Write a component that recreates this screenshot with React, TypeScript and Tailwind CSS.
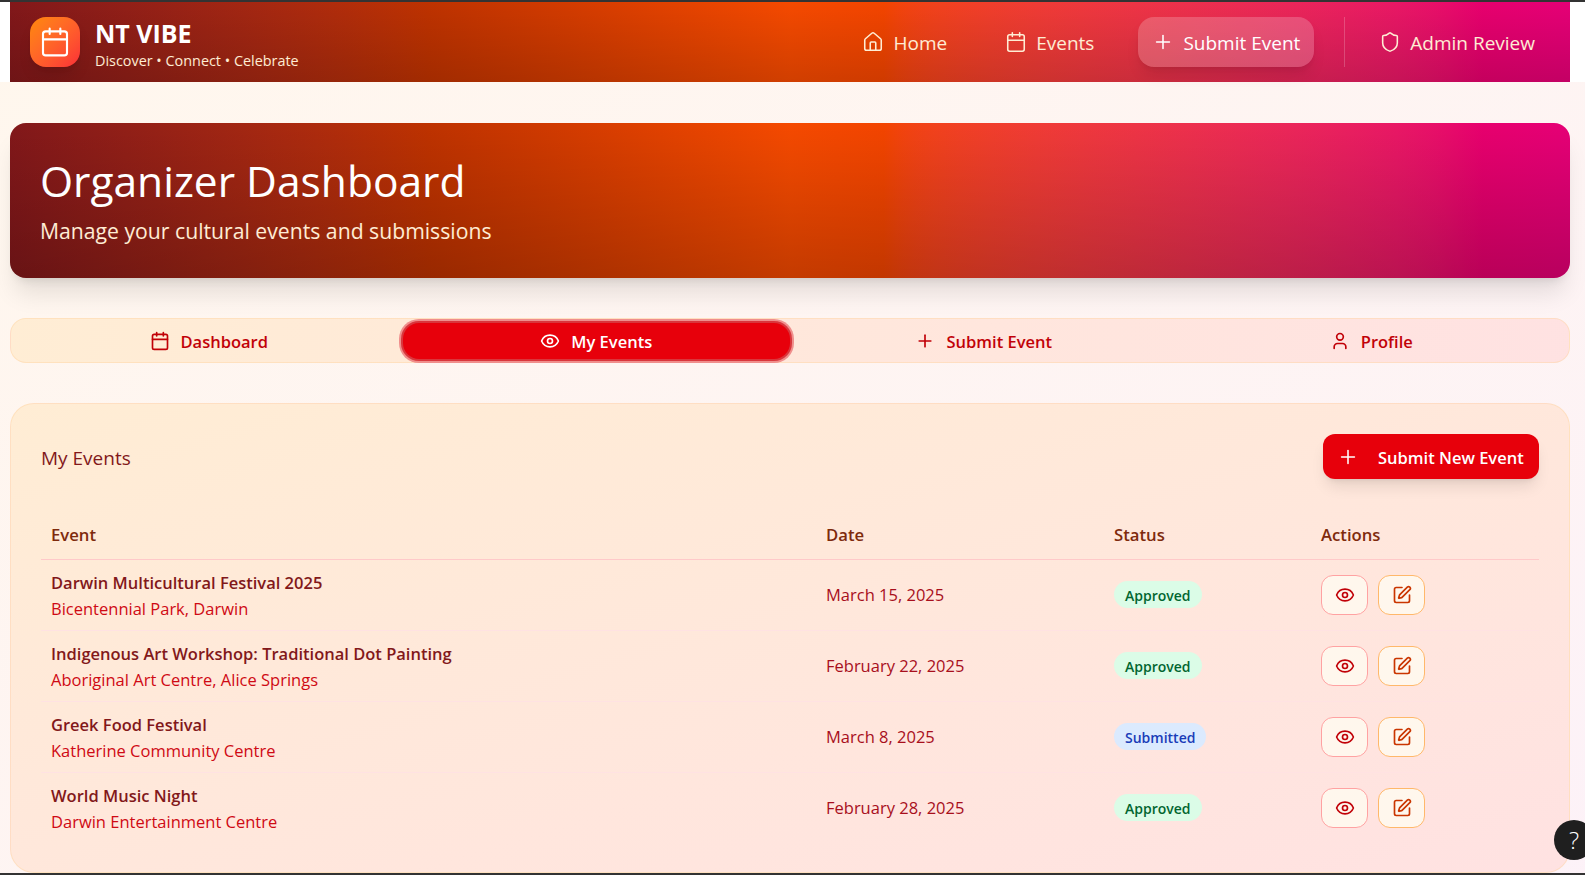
import { Calendar, Eye, House, Plus, Shield, SquarePen, User } from "lucide-react";
import type { ReactNode } from "react";

const events = [
  { title: "Darwin Multicultural Festival 2025", place: "Bicentennial Park, Darwin", date: "March 15, 2025", status: "Approved" },
  { title: "Indigenous Art Workshop: Traditional Dot Painting", place: "Aboriginal Art Centre, Alice Springs", date: "February 22, 2025", status: "Approved" },
  { title: "Greek Food Festival", place: "Katherine Community Centre", date: "March 8, 2025", status: "Submitted" },
  { title: "World Music Night", place: "Darwin Entertainment Centre", date: "February 28, 2025", status: "Approved" },
];

function NavItem({ icon, label, active }: { icon: ReactNode; label: string; active?: boolean }) {
  return (
    <a
      className={
        active
          ? "flex h-[50px] items-center gap-[9px] rounded-2xl bg-white/20 px-[14px] text-white shadow-lg"
          : "flex h-[50px] items-center gap-[9px] rounded-2xl px-[14px] text-orange-100"
      }
    >
      {icon}
      <span className="pt-[2px] text-[19px]">{label}</span>
    </a>
  );
}

function Tab({ icon, label, active }: { icon: ReactNode; label: string; active?: boolean }) {
  return (
    <button
      className={
        active
          ? "mt-[4px] mb-[3px] flex items-center justify-center gap-[11px] rounded-2xl bg-red-600 font-semibold text-white shadow-[0_0_0_2px_#d9363c,0_0_0_4px_#f08e8c]"
          : "flex h-full items-center justify-center gap-[11px] rounded-2xl font-semibold text-red-700"
      }
    >
      {icon}
      <span className="pt-[3px] text-[16.5px]">{label}</span>
    </button>
  );
}

export default function App() {
  return (
    <div className="relative h-[875px] overflow-hidden bg-linear-to-br from-orange-50 to-pink-50 font-['Open_Sans','Noto_Sans',sans-serif]">
      <div className="h-[2px] bg-[#333333]" />
      <div className="h-[80px] bg-white pl-[10px] pr-[15px]">
        <header className="relative flex h-full items-center justify-between bg-linear-to-r from-red-900 via-orange-600 to-pink-600 pl-5 pr-[21px]">
          <div className="absolute inset-0 bg-linear-to-t from-black/15 to-transparent" />
          <div className="relative flex items-center gap-[15px]">
            <div className="flex size-[50px] items-center justify-center rounded-2xl bg-linear-to-br from-orange-400 to-red-500 shadow-lg">
              <Calendar className="size-[32px] text-white" strokeWidth={1.6} />
            </div>
            <div>
              <div className="pt-[5px] text-[25px] leading-[30px] font-bold text-white">NT VIBE</div>
              <div className="pt-[3px] text-[14.4px] leading-5 text-orange-100">Discover • Connect • Celebrate</div>
            </div>
          </div>
          <nav className="relative flex items-center gap-[30px]">
            <NavItem icon={<House className="size-[22px]" strokeWidth={1.7} />} label="Home" />
            <NavItem icon={<Calendar className="size-[22px]" strokeWidth={1.7} />} label="Events" />
            <NavItem icon={<Plus className="size-[22px]" strokeWidth={1.7} />} label="Submit Event" active />
            <div className="h-[50px] border-l border-white/20 pl-[20px]">
              <NavItem icon={<Shield className="size-[22px]" strokeWidth={1.7} />} label="Admin Review" />
            </div>
          </nav>
        </header>
      </div>

      <main className="pl-[10px] pr-[15px] pt-[41px]">
        <section className="relative h-[155px] overflow-hidden rounded-2xl bg-linear-to-r from-red-900 via-orange-600 to-pink-600 px-[30px] pt-[30px] shadow-xl">
          <div className="absolute inset-0 bg-linear-to-t from-black/20 to-transparent" />
          <h1 className="relative text-[42.5px] leading-[55px] text-white">Organizer Dashboard</h1>
          <p className="relative mt-[9px] text-[21.2px] leading-7 text-orange-100">Manage your cultural events and submissions</p>
        </section>

        <div className="mt-[40px] grid h-[45px] grid-cols-4 rounded-2xl border border-orange-200/50 bg-linear-to-r from-orange-100 to-red-100 px-1">
          <Tab icon={<Calendar className="size-[20px]" />} label="Dashboard" />
          <Tab icon={<Eye className="size-[20px]" />} label="My Events" active />
          <Tab icon={<Plus className="size-[20px]" />} label="Submit Event" />
          <Tab icon={<User className="size-[20px]" />} label="Profile" />
        </div>

        <section className="mt-[40px] h-[470px] rounded-3xl border border-orange-200/50 bg-linear-to-br from-orange-100 to-red-100 px-[30px] pt-[30px]">
          <div className="flex h-[45px] items-center justify-between">
            <h2 className="pt-[4px] text-[19px] text-red-900">My Events</h2>
            <button className="flex h-[45px] w-[216px] items-center gap-[19px] rounded-xl bg-red-600 pl-[14px] font-semibold text-white shadow-lg">
              <Plus className="size-[22px]" strokeWidth={1.7} />
              <span className="pt-[3px] text-[16.5px]">Submit New Event</span>
            </button>
          </div>

          <table className="mt-[26px] w-full table-fixed border-collapse text-left">
            <thead>
              <tr className="h-[54px] border-b border-red-200">
                <th className="w-[774px] px-[10px] pt-[5px] text-[16.7px] font-semibold text-orange-900">Event</th>
                <th className="w-[288px] px-[11px] pt-[5px] text-[16.7px] font-semibold text-orange-900">Date</th>
                <th className="w-[207px] px-[11px] pt-[5px] text-[16.7px] font-semibold text-orange-900">Status</th>
                <th className="px-[11px] pt-[5px] text-[16.7px] font-semibold text-orange-900">Actions</th>
              </tr>
            </thead>
            <tbody>
              {events.map((e) => (
                <tr key={e.title} className="h-[71px] border-b border-red-100 last:border-b-0">
                  <td className="px-[10px] pt-[2px]">
                    <div className="text-[16.5px] leading-[25px] font-semibold text-red-900">{e.title}</div>
                    <div className="mt-[1px] text-[16.5px] leading-[25px] text-[#cf0a14]">{e.place}</div>
                  </td>
                  <td className="px-[11px] pt-[2px] text-[16.5px] text-[#a80f1c]">{e.date}</td>
                  <td className="px-[11px]">
                    <span
                      className={
                        e.status === "Approved"
                          ? "inline-block rounded-full bg-green-100 px-[11px] pt-[4px] pb-[2px] text-[14px] leading-[21px] font-semibold text-green-800"
                          : "inline-block rounded-full bg-blue-100 px-[11px] pt-[4px] pb-[2px] text-[14px] leading-[21px] font-semibold text-blue-800"
                      }
                    >
                      {e.status}
                    </span>
                  </td>
                  <td className="px-[11px]">
                    <div className="flex gap-[10px]">
                      <button className="flex h-10 w-[47px] items-center justify-center rounded-xl border border-red-300 bg-orange-50 text-red-700">
                        <Eye className="size-[20px]" />
                      </button>
                      <button className="flex h-10 w-[47px] items-center justify-center rounded-xl border border-orange-300 bg-orange-50 text-orange-700">
                        <SquarePen className="size-[20px]" />
                      </button>
                    </div>
                  </td>
                </tr>
              ))}
            </tbody>
          </table>
        </section>
      </main>

      <div className="absolute left-[1554px] top-[820px] flex size-10 items-center justify-center rounded-full bg-[#1f1f1f] text-[24px] font-light text-white">
        ?
      </div>
      <div className="absolute inset-x-0 bottom-0 h-[2px] bg-[#333333]" />
    </div>
  );
}
